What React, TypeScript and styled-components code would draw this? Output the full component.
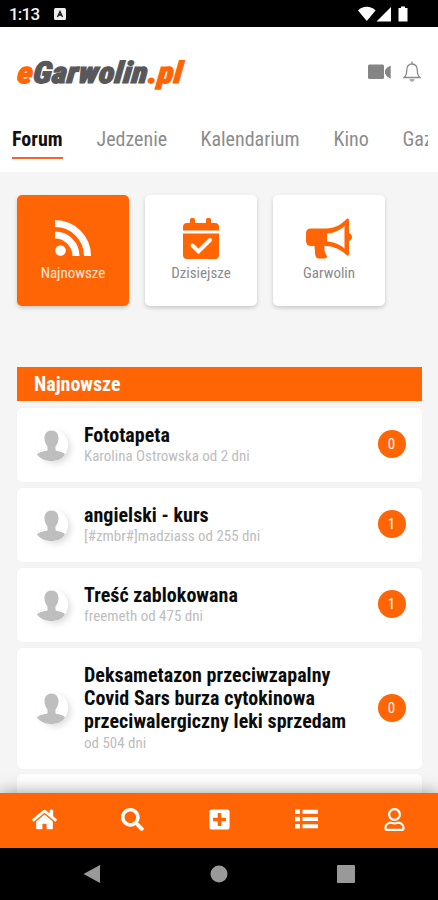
import React from 'react';
import styled, { createGlobalStyle } from 'styled-components';
import { FaHome, FaSearch, FaPlusSquare, FaRegUser } from 'react-icons/fa';

const ORANGE = '#ff6505';

const GlobalStyle = createGlobalStyle`
  *, *::before, *::after { box-sizing: border-box; }
  body { margin: 0; overflow: hidden; }
  svg { display: block; flex: none; }
`;

const Screen = styled.div`
  width: 438px;
  height: 900px;
  display: flex;
  flex-direction: column;
  overflow: hidden;
  background: #f5f5f5;
  font-family: 'Roboto Condensed', Roboto, sans-serif;
  font-stretch: 75%;
`;

const StatusBar = styled.div`
  flex: none;
  height: 27px;
  padding: 0 29px 0 9px;
  background: #000;
  color: #f2f2f2;
  display: flex;
  align-items: center;
  justify-content: space-between;
`;

const StatusGroup = styled.div`
  display: flex;
  align-items: center;
`;

const Clock = styled.span`
  width: 45px;
  padding-top: 1px;
  font: 500 17px/20px Roboto, sans-serif;
  font-stretch: 100%;
  letter-spacing: -0.8px;
`;

const Header = styled.header`
  flex: none;
  height: 145px;
  background: #fff;
  display: flex;
  flex-direction: column;
`;

const Brand = styled.div`
  height: 89px;
  padding: 0 17px;
  display: flex;
  align-items: center;
  justify-content: space-between;
`;

const Logo = styled.div`
  padding-top: 2px;
  font: italic 900 30px/34px 'Roboto Condensed', Roboto, sans-serif;
  font-stretch: 75%;
  letter-spacing: 0.4px;
  -webkit-text-stroke: 1.2px currentColor;
  color: #58585a;
  white-space: nowrap;
  transform: scaleX(1.08) skewX(-5deg);
  transform-origin: 0 75%;
`;

const Accent = styled.span`
  color: ${ORANGE};
`;

const Actions = styled.div`
  display: flex;
  align-items: center;
  gap: 11px;
`;

const Tabs = styled.nav`
  margin: 9px 10px 0 12px;
  display: flex;
  gap: 34px;
  overflow: hidden;
`;

const Tab = styled.span<{ $active?: boolean; $width: number }>`
  flex: none;
  width: ${p => p.$width}px;
  height: 34px;
  margin-right: ${p => (p.$active ? '-0.5px' : '0')};
  font-size: 20px;
  line-height: 29px;
  white-space: nowrap;
  font-weight: ${p => (p.$active ? 700 : 400)};
  color: ${p => (p.$active ? '#111' : '#8c8c8c')};
  border-bottom: 2px solid ${p => (p.$active ? '#f3652b' : 'transparent')};
`;

const Content = styled.main`
  flex: 1;
  min-height: 0;
  overflow: hidden;
  padding: 23px 16px 0 17px;
`;

const Tiles = styled.div`
  display: flex;
  gap: 16px;
`;

const Tile = styled.div<{ $active?: boolean }>`
  width: 112px;
  height: 111px;
  padding-top: 22px;
  border-radius: 5px;
  background: ${p => (p.$active ? ORANGE : '#fff')};
  color: ${p => (p.$active ? '#fff' : ORANGE)};
  box-shadow: 0 2px 4px rgba(0, 0, 0, 0.18);
  display: flex;
  flex-direction: column;
  align-items: center;
`;

const TileIcon = styled.div`
  height: 42px;
  display: flex;
  align-items: center;
`;

const TileLabel = styled.span<{ $active?: boolean }>`
  margin-top: 5px;
  font-size: 15px;
  line-height: 18px;
  color: ${p => (p.$active ? '#ffe9dc' : '#8a8a8a')};
`;

const SectionTitle = styled.h2`
  margin: 61px 0 6.5px;
  height: 34px;
  padding-left: 17px;
  background: ${ORANGE};
  color: #fff;
  font-size: 20px;
  line-height: 35px;
  font-weight: 700;
`;

const Thread = styled.article`
  margin-bottom: 5.5px;
  padding: 16px 16.5px 18px 20px;
  min-height: 74.5px;
  display: flex;
  align-items: center;
  background: #fff;
  border-radius: 5px;
  box-shadow: 0 0 3px rgba(0, 0, 0, 0.03);
`;

const Avatar = styled.div`
  flex: none;
  width: 31px;
  height: 32px;
  margin: 2px 16px 0 0;
  border-radius: 50%;
  box-shadow: 3px 3px 6px rgba(0, 0, 0, 0.12);
`;

const ThreadText = styled.div`
  flex: 1;
  min-width: 0;
`;

const ThreadTitle = styled.div`
  font-size: 20px;
  line-height: 23.4px;
  letter-spacing: 0.03px;
  font-weight: 700;
  color: #0c0c0c;
  white-space: pre-line;
`;

const ThreadMeta = styled.div`
  font-size: 15px;
  line-height: 18px;
  margin-bottom: -1px;
  color: #bdbdbd;
`;

const Count = styled.span`
  flex: none;
  width: 28px;
  height: 28px;
  margin-top: 1px;
  border-radius: 50%;
  background: ${ORANGE};
  color: #fff;
  font-size: 15px;
  line-height: 28px;
  text-align: center;
`;

const BottomBar = styled.nav`
  position: relative;
  flex: none;
  height: 55px;
  background: ${ORANGE};
  color: #fff;
  display: grid;
  grid-template-columns: repeat(5, 1fr);
  place-items: center;
  padding: 0 0 3px 1px;
  box-shadow: 0 0 16px rgba(0, 0, 0, 0.4);
`;

const SystemBar = styled.div`
  position: relative;
  flex: none;
  height: 52px;
  padding: 0 83px;
  background: #000;
  display: flex;
  align-items: center;
  justify-content: space-between;
`;

const Person = () => (
  <svg width="31" height="32" viewBox="0 0 31 32" fill="#bebebe">
    <path d="M14.500 1.500c4.300 0 7 3 7 7.500 0 3.500-1.200 6.500-3 8.500v3.800c2 1.200 7.500 1.200 9.500 4.200-3 4.500-8 6.500-13.500 6.500S3.500 30 0 25.500c2.500-3 8-3 10.500-4.200v-3.800c-1.800-2-3-5-3-8.500C7.500 4.500 10.200 1.500 14.500 1.500z" />
  </svg>
);

const RssIcon = () => (
  <svg width="36" height="36" viewBox="0 0 36 36" fill="none" stroke="currentColor" strokeWidth="7">
    <circle cx="5.500" cy="30.500" r="5.300" fill="currentColor" stroke="none" />
    <path d="M0 15a21 21 0 0 1 21 21M0 3.500a32.500 32.500 0 0 1 32.500 32.500" />
  </svg>
);

const CalendarIcon = () => (
  <svg width="36" height="41" viewBox="0 0 36 41" fill="currentColor">
    <path d="M7 1.500Q7 0 8.500 0h2Q12 0 12 1.500V5h11V1.500Q23 0 24.500 0h2Q28 0 28 1.500V5h4q4 0 4 4v3.500H0V9q0-4 4-4h3z" />
    <path d="M0 15.500h36V37q0 4-4 4H4q-4 0-4-4z" />
    <path d="M9.500 27.500l6 6L27 22" fill="none" stroke="#fff" strokeWidth="4" strokeLinecap="round" />
  </svg>
);

const HornIcon = () => (
  <svg width="46" height="41" viewBox="0 0 46 41" fill="currentColor">
    <path
      fillRule="evenodd"
      d="M5 10.500h15C29 10.500 36 6 40.500 1 41.500 0 43 .5 43 2v13c4 1.500 4 6.500 0 8v13c0 1.500-1.500 2-2.500 1C36 32.500 28 28 20 28h-1.500c-.5 4 .5 7 2.200 9.500 1 1.500-.2 3-2 3H13c-2 0-3.500-1.500-3.800-4L8.500 28H5q-5 0-5-5v-7.500q0-5 5-5zM21 15.500v8c7.500.5 13 3 17.500 7V8C34 12 28.500 15 21 15.500z"
    />
  </svg>
);

const ListIcon = () => (
  <svg width="23" height="20" viewBox="0 0 23 20" fill="currentColor">
    <path d="M0 .5h5v4.500H0zM0 7.700h5v4.500H0zM0 15h5v4.500H0zM7.500.8H23v4H7.500zM7.500 8H23v4H7.500zM7.500 15.300H23v4H7.500z" />
  </svg>
);

const threads = [
  { title: 'Fototapeta', meta: 'Karolina Ostrowska od 2 dni', count: 0 },
  { title: 'angielski - kurs', meta: '[#zmbr#]madziass od 255 dni', count: 1 },
  { title: 'Treść zablokowana', meta: 'freemeth od 475 dni', count: 1 },
  {
    title: 'Deksametazon przeciwzapalny\nCovid Sars burza cytokinowa\nprzeciwalergiczny leki sprzedam',
    meta: 'od 504 dni',
    count: 0,
  },
];

export default function App() {
  return (
    <Screen>
      <GlobalStyle />
      <StatusBar>
        <StatusGroup>
          <Clock>1:13</Clock>
          <svg width="12" height="12" viewBox="0 0 12 12">
            <rect width="12" height="12" rx="1.500" fill="#eee" />
            <path d="M3.500 9L6 3.500 8.500 9M4.500 7h3" fill="none" stroke="#111" strokeWidth="1.300" />
          </svg>
        </StatusGroup>
        <svg width="51" height="16" viewBox="0 0 51 16" fill="#fff">
          <path d="M0 4.500C4.500-.5 13-.5 17.500 4.500L8.800 15z" />
          <path d="M18.500 15.500L33 1v14.500z" />
          <path d="M40.500 2h2.500V.5h4V2h2.500v13.500h-9z" />
        </svg>
      </StatusBar>
      <Header>
        <Brand>
          <Logo>
            <Accent>e</Accent>Garwolin<Accent>.pl</Accent>
          </Logo>
          <Actions>
            <svg width="24" height="16" viewBox="0 0 24 16" fill="#858585">
              <rect y="0.500" width="16" height="14.500" rx="1.500" />
              <path d="M17 6.200Q18.500 3 22.700 1.500v13Q18.500 13 17 9.800z" />
            </svg>
            <svg width="18" height="22" viewBox="0 0 18 22" fill="none" stroke="#8a8a8a" strokeWidth="1.300">
              <path d="M9 .5v2.500M1 16.500c2-1.500 2.700-3 2.700-7C3.700 5.500 5.500 3 9 3s5.300 2.500 5.300 6.500c0 4 .7 5.500 2.700 7z" />
              <path d="M6.500 18h5c0 3.500-5 3.500-5 0z" fill="#aaa" stroke="none" />
            </svg>
          </Actions>
        </Brand>
        <Tabs>
          <Tab $active $width={51}>Forum</Tab>
          <Tab $width={70}>Jedzenie</Tab>
          <Tab $width={99}>Kalendarium</Tab>
          <Tab $width={35}>Kino</Tab>
          <Tab $width={50}>Gazetki</Tab>
        </Tabs>
      </Header>
      <Content>
        <Tiles>
          <Tile $active>
            <TileIcon><RssIcon /></TileIcon>
            <TileLabel $active>Najnowsze</TileLabel>
          </Tile>
          <Tile>
            <TileIcon><CalendarIcon /></TileIcon>
            <TileLabel>Dzisiejsze</TileLabel>
          </Tile>
          <Tile>
            <TileIcon><HornIcon /></TileIcon>
            <TileLabel>Garwolin</TileLabel>
          </Tile>
        </Tiles>
        <SectionTitle>Najnowsze</SectionTitle>
        {threads.map(t => (
          <Thread key={t.title}>
            <Avatar><Person /></Avatar>
            <ThreadText>
              <ThreadTitle>{t.title}</ThreadTitle>
              <ThreadMeta>{t.meta}</ThreadMeta>
            </ThreadText>
            <Count>{t.count}</Count>
          </Thread>
        ))}
        <Thread />
      </Content>
      <BottomBar>
        <FaHome size={25} />
        <FaSearch size={23} />
        <FaPlusSquare size={23} />
        <ListIcon />
        <FaRegUser size={23} />
      </BottomBar>
      <SystemBar>
        <svg width="18" height="18" viewBox="0 0 18 18" fill="#999"><path d="M.5 9L17 0v18z" /></svg>
        <svg width="18" height="18" viewBox="0 0 18 18" fill="#999"><circle cx="9" cy="9" r="8.500" /></svg>
        <svg width="18" height="18" viewBox="0 0 18 18" fill="#999"><rect width="18" height="18" rx="1" /></svg>
      </SystemBar>
    </Screen>
  );
}
